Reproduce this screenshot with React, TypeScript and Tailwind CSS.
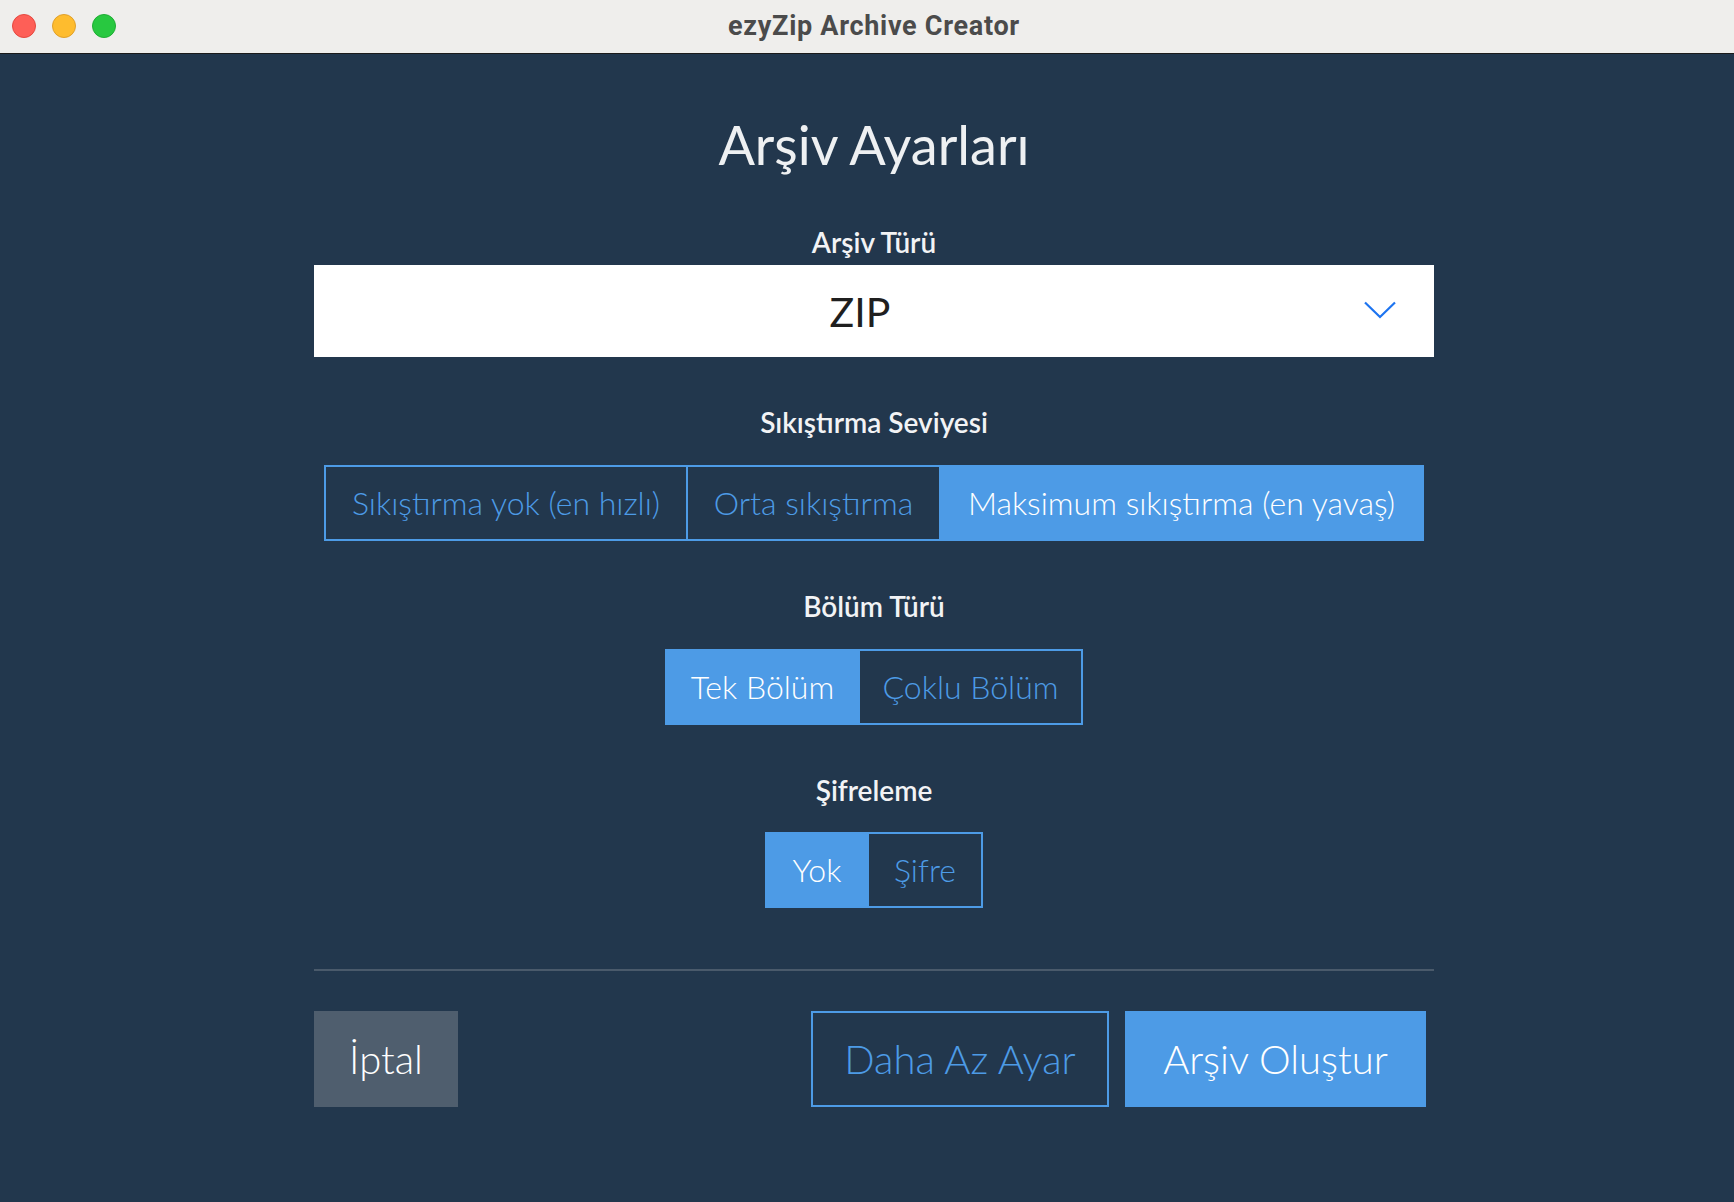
import { ReactNode } from "react";

const lato = { fontFamily: "Lato, 'Noto Sans', sans-serif" };

type Option = { label: string; width: string; active?: boolean };

const Segmented = ({ options }: { options: Option[] }) => (
  <div className="flex border-2 border-[#4d9be6]">
    {options.map((opt, i) => (
      <div
        key={opt.label}
        className={
          "h-[72px] flex items-center justify-center text-[32px] leading-none font-light whitespace-nowrap " +
          opt.width +
          " " +
          (i > 0 ? "border-l-2 border-[#4d9be6] " : "") +
          (opt.active ? "bg-[#4d9be6] text-white" : "text-[#4d9be6]")
        }
      >
        {opt.label}
      </div>
    ))}
  </div>
);

const Field = ({ label, children, gap }: { label: string; children: ReactNode; gap: string }) => (
  <div className="flex flex-col items-center">
    <div className={"text-[28px] leading-[28px] font-semibold text-[#f2f3f5] " + gap}>{label}</div>
    {children}
  </div>
);

export default function App() {
  return (
    <div className="w-full h-[1202px] flex flex-col bg-[#22374d] overflow-hidden" style={lato}>
      {/* title bar */}
      <div className="relative h-[54px] shrink-0 bg-[#efeeec] border-b border-[#1b1b1b] flex items-center justify-center pl-[14px]">
        <div className="absolute left-[12px] top-[14px] flex gap-[16px]">
          <span className="w-[24px] h-[24px] rounded-full bg-[#fe5f57] border border-[#e5483f]" />
          <span className="w-[24px] h-[24px] rounded-full bg-[#febc2e] border border-[#e0a02a]" />
          <span className="w-[24px] h-[24px] rounded-full bg-[#28c840] border border-[#1fad34]" />
        </div>
        <span
          className="text-[27px] font-bold text-[#4b4b4b] tracking-[0.7px]"
          style={{ fontFamily: "Roboto, 'Liberation Sans', sans-serif" }}
        >
          ezyZip Archive Creator
        </span>
      </div>

      <div className="flex justify-center pl-[14px]">
        <div className="w-[1120px] flex flex-col items-center">
          <h1 className="mt-[64px] text-[54px] leading-[54px] font-normal text-[#eef0f2]">Arşiv Ayarları</h1>

          <div className="mt-[56px] w-full">
            <Field label="Arşiv Türü" gap="mb-[9px]">
              <div className="w-full h-[92px] bg-white flex items-center relative">
                <span className="flex-1 text-center pr-[28px] text-[41px] leading-none text-[#1f1f1f]">ZIP</span>
                <svg
                  className="absolute right-[38px] top-[36px]"
                  width="32"
                  height="18"
                  viewBox="0 0 32 18"
                  fill="none"
                >
                  <path d="M1 1.5 L16 16 L31 1.5" stroke="#1d74f0" strokeWidth="2.2" />
                </svg>
              </div>
            </Field>
          </div>

          <div className="mt-[51px]">
            <Field label="Sıkıştırma Seviyesi" gap="mb-[29px]">
              <Segmented
                options={[
                  { label: "Sıkıştırma yok (en hızlı)", width: "w-[360px]" },
                  { label: "Orta sıkıştırma", width: "w-[253px]" },
                  { label: "Maksimum sıkıştırma (en yavaş)", width: "w-[483px]", active: true },
                ]}
              />
            </Field>
          </div>

          <div className="mt-[51px]">
            <Field label="Bölüm Türü" gap="mb-[29px]">
              <Segmented
                options={[
                  { label: "Tek Bölüm", width: "w-[191px]", active: true },
                  { label: "Çoklu Bölüm", width: "w-[223px]" },
                ]}
              />
            </Field>
          </div>

          <div className="mt-[51px]">
            <Field label="Şifreleme" gap="mb-[28px]">
              <Segmented
                options={[
                  { label: "Yok", width: "w-[100px]", active: true },
                  { label: "Şifre", width: "w-[114px]" },
                ]}
              />
            </Field>
          </div>

          <div className="mt-[61px] w-full h-[2px] bg-[#4a5a6b]" />

          <div className="mt-[40px] w-full flex justify-between pr-[8px]">
            <button className="w-[144px] h-[96px] bg-[#4f5e6e] text-[40px] leading-none font-light text-white">İptal</button>
            <div className="flex gap-[16px]">
              <button className="w-[298px] h-[96px] border-2 border-[#4d9be6] text-[40px] leading-none font-light text-[#4d9be6]">
                Daha Az Ayar
              </button>
              <button className="w-[301px] h-[96px] bg-[#4d9be6] text-[40px] leading-none font-light text-white">
                Arşiv Oluştur
              </button>
            </div>
          </div>
        </div>
      </div>
    </div>
  );
}
